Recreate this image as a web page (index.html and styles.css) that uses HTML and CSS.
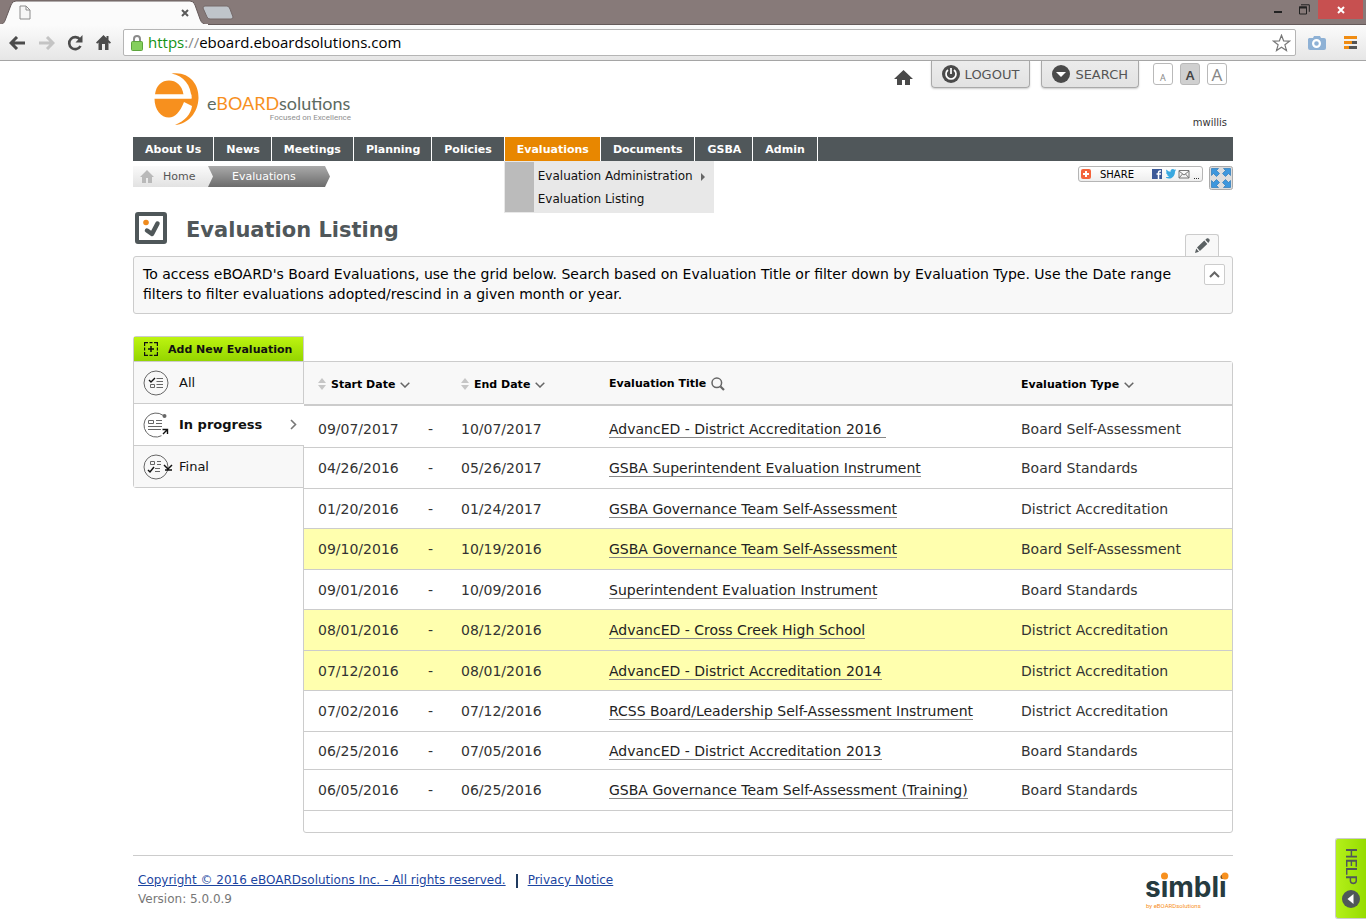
FILE: index.html
```html
<!DOCTYPE html>
<html lang="en">
<head>
    <meta charset="UTF-8">
    <meta name="viewport" content="width=device-width, initial-scale=1.0">
    <title>Evaluation Listing</title>
    <link rel="stylesheet" href="styles.css">
</head>
<body>
    <!-- Browser bar -->
    <div class="browser">
        <div class="titlebar">
            <div class="tab">
                <svg class="tab-shape" width="208" height="25" viewBox="0 0 208 25">
                    <path d="M0 25C4 24 5 21 6 18L11 5Q12 1 16 1H190Q194 1 195 5L200 19Q202 25 208 25Z" fill="#fbfbfb" stroke="#655a5a"/>
                    <path d="M0 25h208" stroke="#fbfbfb" stroke-width="2"/>
                </svg>
                <svg width="12" height="15" viewBox="0 0 12 15"><path d="M1 1h6l4 4v9H1zM7 1v4h4" fill="#f6f6f6" stroke="#8c8c8c"/></svg>
                <button class="plain" aria-label="Close tab"><svg width="8" height="8" viewBox="0 0 8 8"><path d="M1 1l6 6M7 1L1 7" stroke="#5a5a5a" stroke-width="2"/></svg></button>
            </div>
            <button class="plain new-tab" aria-label="New tab"><svg width="32" height="16" viewBox="0 0 32 16"><path d="M3 1h22q2 0 3 3l3 8q0 2-2 2H8q-2 0-3-2L1 3q0-2 2-2z" fill="#bfc4ca" stroke="#746969"/></svg></button>
            <div class="window-buttons">
                <button class="plain" aria-label="Minimize"><svg width="10" height="14" viewBox="0 0 10 14"><path d="M1 12h8" stroke="#222" stroke-width="2"/></svg></button>
                <button class="plain" aria-label="Restore"><svg width="11" height="11" viewBox="0 0 11 11"><path d="M.5 3h7v7h-7zM2 .8h8.300v7" fill="none" stroke="#222"/><path d="M0 3.500h8" stroke="#222" stroke-width="2"/></svg></button>
                <button class="plain window-close" aria-label="Close"><svg width="8" height="8" viewBox="0 0 8 8"><path d="M1 1l6 6M7 1L1 7" stroke="#fff" stroke-width="2"/></svg></button>
            </div>
        </div>
        <div class="toolbar">
            <button class="plain" aria-label="Back"><svg width="17" height="14" viewBox="0 0 17 14"><path d="M8 1L2 7l6 6M2 7h14" fill="none" stroke="#4c4c4c" stroke-width="3"/></svg></button>
            <button class="plain" aria-label="Forward"><svg width="17" height="14" viewBox="0 0 17 14"><path d="M9 1l6 6-6 6M15 7H1" fill="none" stroke="#c4c4c4" stroke-width="3"/></svg></button>
            <button class="plain" aria-label="Reload"><svg width="17" height="16" viewBox="0 0 17 16"><path d="M13 4.500A6 6 0 1 0 13.500 11" fill="none" stroke="#4c4c4c" stroke-width="2.600"/><path d="M15.500 0v7.500H8.500z" fill="#4c4c4c"/></svg></button>
            <button class="plain" aria-label="Home page"><svg width="15" height="15" viewBox="0 0 15 15"><path d="M7.500 0L0 7.500l1.200 1.300L2.500 7.600V15H6V9h3v6h3.500V7.600l1.300 1.200L15 7.500l-2.500-2.600V1h-2v1.900z" fill="#4c4c4c"/></svg></button>
            <div class="address">
                <svg width="12" height="16" viewBox="0 0 12 16"><path d="M3 7V4a3 3 0 0 1 6 0v3" fill="none" stroke="#8b8b8b" stroke-width="2"/><rect x=".5" y="6.500" width="11" height="9" rx="1" fill="#85cf5d" stroke="#5da53d"/></svg>
                <label for="url"><span class="secure">https</span>://</label>
                <input type="text" id="url" value="eboard.eboardsolutions.com">
                <button class="plain" aria-label="Bookmark"><svg width="19" height="18" viewBox="0 0 19 18"><path d="M9.500 1.200l2.100 5.600 5.900.3-4.600 3.700 1.600 5.800-5-3.300-5 3.300 1.600-5.800L1.500 7.100l5.900-.3z" fill="#fff" stroke="#777" stroke-width="1.200"/></svg></button>
            </div>
            <button class="plain" aria-label="Capture"><svg width="18" height="16" viewBox="0 0 18 16"><path d="M1 3h4l1-2h6l1 2h3q2 0 2 2v8q0 2-2 2H2q-2 0-2-2V4z" fill="#8eb1d5"/><circle cx="8.500" cy="8.500" r="3.400" fill="none" stroke="#fff" stroke-width="2.200"/></svg></button>
            <button class="plain browser-menu" aria-label="Menu"><svg width="13" height="13" viewBox="0 0 13 13"><path d="M0 1.500h13M0 6.500h8M0 11.500h5" stroke="#f08c12" stroke-width="3"/><path d="M8 6.500h5M5 11.500h8" stroke="#555" stroke-width="3"/></svg></button>
        </div>
    </div>

    <div class="page">
        <!-- Header -->
        <header class="header">
            <a href="#" class="logo" aria-label="eBOARDsolutions">
                <svg width="204" height="56" viewBox="0 0 204 56">
                    <path d="M18.500 2.500C36 0 46 13 45.500 27C45 42 35 53 22 54C32 50 38 43 39 35L31 31C27 41 22 46.500 16 46.500C8 46.500 1.500 39 1.500 27.500H38.500C38 14 31 5 18.500 2.500Z" fill="#f7901e"/>
                    <path d="M2 23.500C3 14 9 9.500 16 9.500S29 14 30.500 23.500z" fill="#f7901e"/>
                    <path d="M1 25.500h37.500" fill="none" stroke="#fff" stroke-width="4"/>
                    <text x="54" y="39" class="logo-name"><tspan>e</tspan><tspan class="logo-board">BOARD</tspan><tspan>solutions</tspan></text>
                    <text x="198" y="49" class="logo-tag">Focused on Excellence</text>
                </svg>
            </a>
            <div class="tools">
                <a href="#" class="home-link" aria-label="Home"><svg width="19" height="15" viewBox="0 0 19 15"><path d="M9.500 0L0 9h3v6h5V10h3v5h5V9h3z" fill="#4a4a4a"/></svg></a>
                <button class="top-button"><svg width="18" height="18" viewBox="0 0 18 18"><circle cx="9" cy="9" r="9" fill="#4a4a4a"/><path d="M6 5a5 5 0 1 0 6 0M9 3v6" fill="none" stroke="#fff" stroke-width="1.700"/></svg>LOGOUT</button>
                <button class="top-button"><svg width="18" height="18" viewBox="0 0 18 18"><circle cx="9" cy="9" r="9" fill="#4a4a4a"/><path d="M4 7h10l-5 5z" fill="#fff"/></svg>SEARCH</button>
                <div class="sizes">
                    <button class="size small">A</button>
                    <button class="size medium">A</button>
                    <button class="size large">A</button>
                </div>
            </div>
            <span class="user">mwillis</span>
        </header>

        <!-- Main menu -->
        <nav>
            <ul class="menu">
                <li><a href="#">About Us</a></li>
                <li><a href="#">News</a></li>
                <li><a href="#">Meetings</a></li>
                <li><a href="#">Planning</a></li>
                <li><a href="#">Policies</a></li>
                <li class="active"><a href="#">Evaluations</a>
                    <ul class="submenu">
                        <li><a href="#">Evaluation Administration <svg width="4" height="8" viewBox="0 0 4 8"><path d="M0 0l4 4-4 4z" fill="#666"/></svg></a></li>
                        <li><a href="#">Evaluation Listing</a></li>
                    </ul>
                </li>
                <li><a href="#">Documents</a></li>
                <li><a href="#">GSBA</a></li>
                <li><a href="#">Admin</a></li>
            </ul>
        </nav>

        <div class="subbar">
            <div class="breadcrumb">
                <a href="#" class="crumb"><svg width="14" height="13" viewBox="0 0 14 13"><path d="M7 0L0 7h2v6h4V8h2v5h4V7h2z" fill="#b9b9b9"/></svg>Home</a>
                <a href="#" class="crumb current">Evaluations</a>
            </div>
            <div class="share-box">
                <button class="share">
                    <svg width="10" height="10" viewBox="0 0 10 10"><rect width="10" height="10" rx="2" fill="#f4633a"/><path d="M5 2v6M2 5h6" stroke="#fff" stroke-width="2"/></svg>
                    <span>SHARE</span>
                    <svg width="48" height="12" viewBox="0 0 48 12"><rect y="1" width="10" height="10" fill="#3b5998"/><path d="M9 3H8Q6.500 3 6.500 5v6M4.500 6H9" fill="none" stroke="#fff" stroke-width="1.500"/><path d="M14 9q2 .3 3-.8-1.500-.2-2-1.500h.8Q14 6 14 4.300l.9.2Q13.500 3 14.400 1.500 16.200 3.700 18.500 3.800 18.500 1 20.800 1q1 0 1.700.7L24 1.200l-.9 1.300 1.100-.3-1.200 1.200C23 8 20 10.500 17 10.500q-1.700 0-3-.8z" fill="#3aa9e0"/><path d="M27 2.500h10v7.500H27zM27 3l5 4 5-4M27 10l3.500-4M37 10l-3.500-4" fill="none" stroke="#777"/><path d="M42 10.500h1M44 10.500h1M46 10.500h1" stroke="#333"/></svg>
                </button>
                <button class="plain" aria-label="Full screen"><svg width="24" height="24" viewBox="0 0 24 24"><rect x=".5" y=".5" width="23" height="23" rx="2" fill="#ddd" stroke="#aaa"/><g fill="#3d97dd" stroke="#1c6fb4" stroke-width=".6"><path d="M2.500 2.500h7L7.500 4.500 10.500 7.500 7.500 10.500 4.500 7.500 2.500 9.500z"/><path d="M21.500 2.500v7L19.500 7.500 16.500 10.500 13.500 7.500 16.500 4.500 14.500 2.500z"/><path d="M2.500 21.500v-7L4.500 16.500 7.500 13.500 10.500 16.500 7.500 19.500 9.500 21.500z"/><path d="M21.500 21.500h-7L16.500 19.500 13.500 16.500 16.500 13.500 19.500 16.500 21.500 14.500z"/></g></svg></button>
            </div>
        </div>

        <div class="title-row">
            <svg width="32" height="32" viewBox="0 0 32 32"><rect x="2" y="2" width="28" height="28" rx="1" fill="#fff" stroke="#4f5759" stroke-width="4"/><circle cx="11" cy="10.500" r="2.800" fill="#ee8a1d"/><path d="M12 18.500l5 3.500L22.500 11.500" fill="none" stroke="#4f5759" stroke-width="4.500" stroke-linecap="round" stroke-linejoin="round"/></svg>
            <h1>Evaluation Listing</h1>
            <button class="edit-tab" aria-label="Edit"><svg width="15" height="15" viewBox="0 0 15 15"><path d="M0 15l1.200-4.500 2.800 3.300zM2 9.500L9.300 2.600l3 3.300L4.900 13zM10.300 1.800L12 .3q1-.5 2 .5t.6 2.200L13.300 5z" fill="#5b6163"/></svg></button>
        </div>

        <!-- Description -->
        <section class="intro">
            <p>To access eBOARD's Board Evaluations, use the grid below. Search based on Evaluation Title or filter down by Evaluation Type. Use the Date range filters to filter evaluations adopted/rescind in a given month or year.</p>
            <button class="collapse" aria-label="Collapse"><svg width="11" height="7" viewBox="0 0 11 7"><path d="M1 6l4.500-4.500L10 6" fill="none" stroke="#666" stroke-width="2"/></svg></button>
        </section>

        <main class="content">
            <!-- Filter by status -->
            <aside class="sidebar">
                <button class="add"><svg width="14" height="14" viewBox="0 0 14 14"><path d="M.6 4V.6H4M10 .6h3.400V4M13.400 10v3.400H10M4 13.400H.6V10M5.500 .6h3M5.500 13.400h3M.6 5.500v3M13.400 5.500v3" fill="none" stroke="#111" stroke-width="1.200"/><path d="M7 4v6M4 7h6" stroke="#111" stroke-width="1.500"/></svg>Add New Evaluation</button>
                <a href="#" class="filter"><svg width="30" height="26" viewBox="0 0 30 26"><circle cx="13" cy="13" r="12" fill="none" stroke="#666"/><path d="M6 10l2 2 4-4" fill="none" stroke="#111" stroke-width="1.400"/><path d="M7.500 14.500h4v3h-4zM13.500 8.500H20M13.500 11.500H20M13.500 14.500H20M13.500 17.500H20" fill="none" stroke="#666"/></svg>All</a>
                <a href="#" class="filter selected"><svg width="30" height="26" viewBox="0 0 30 26"><path d="M20 3.300A12 12 0 1 0 18.500 23.700" fill="none" stroke="#666"/><circle cx="21.500" cy="4" r="2" fill="#666"/><path d="M20 22l4-4M19.500 17.500H24.500V22" fill="none" stroke="#111" stroke-width="1.400"/><path d="M5.500 8.500h5v3h-5zM13 8.500h6M13 11.500h6M5 14.500h14M5 17.500h13" fill="none" stroke="#666"/></svg>In progress<svg class="chevron" width="7" height="11" viewBox="0 0 7 11"><path d="M1 1l4.500 4.500L1 10" fill="none" stroke="#777" stroke-width="1.600"/></svg></a>
                <a href="#" class="filter"><svg width="30" height="26" viewBox="0 0 30 26"><circle cx="13" cy="13" r="12" fill="none" stroke="#666"/><path d="M7.500 7.500h4v3h-4zM14 7.500h4M14 10.500h4M12 14.500h5M12 17.500h5" fill="none" stroke="#666"/><path d="M5 16l2 2 4-5M21 11l4 4 4-4M22 16h7" fill="none" stroke="#111" stroke-width="1.500"/></svg>Final</a>
            </aside>

            <!-- Evaluation grid -->
            <div class="grid">
                <table>
                    <colgroup>
                        <col class="col-start">
                        <col class="col-dash">
                        <col class="col-end">
                        <col class="col-title">
                        <col>
                    </colgroup>
                    <thead>
                        <tr>
                            <th colspan="2"><svg class="sort" width="8" height="12" viewBox="0 0 8 12"><path d="M4 0l4 5H0zM0 7h8l-4 5z" fill="#c6c6c6"/></svg>Start Date<svg class="down" width="10" height="6" viewBox="0 0 10 6"><path d="M.7 .7L5 5 9.300 .7" fill="none" stroke="#666" stroke-width="1.500"/></svg></th>
                            <th><svg class="sort" width="8" height="12" viewBox="0 0 8 12"><path d="M4 0l4 5H0zM0 7h8l-4 5z" fill="#c6c6c6"/></svg>End Date<svg class="down" width="10" height="6" viewBox="0 0 10 6"><path d="M.7 .7L5 5 9.300 .7" fill="none" stroke="#666" stroke-width="1.500"/></svg></th>
                            <th>Evaluation Title<svg class="find" width="14" height="14" viewBox="0 0 14 14"><circle cx="5.800" cy="5.800" r="4.800" fill="none" stroke="#666" stroke-width="1.500"/><path d="M9.500 9.500L13 13" stroke="#666" stroke-width="2.200"/></svg></th>
                            <th>Evaluation Type<svg class="down" width="10" height="6" viewBox="0 0 10 6"><path d="M.7 .7L5 5 9.300 .7" fill="none" stroke="#666" stroke-width="1.500"/></svg></th>
                        </tr>
                    </thead>
                    <tbody>
                        <tr><td>09/07/2017</td><td>-</td><td>10/07/2017</td><td><a href="#">AdvancED - District Accreditation 2016&nbsp;</a></td><td>Board Self-Assessment</td></tr>
                        <tr><td>04/26/2016</td><td>-</td><td>05/26/2017</td><td><a href="#">GSBA Superintendent Evaluation Instrument</a></td><td>Board Standards</td></tr>
                        <tr><td>01/20/2016</td><td>-</td><td>01/24/2017</td><td><a href="#">GSBA Governance Team Self-Assessment</a></td><td>District Accreditation</td></tr>
                        <tr class="marked"><td>09/10/2016</td><td>-</td><td>10/19/2016</td><td><a href="#">GSBA Governance Team Self-Assessment</a></td><td>Board Self-Assessment</td></tr>
                        <tr><td>09/01/2016</td><td>-</td><td>10/09/2016</td><td><a href="#">Superintendent Evaluation Instrument</a></td><td>Board Standards</td></tr>
                        <tr class="marked"><td>08/01/2016</td><td>-</td><td>08/12/2016</td><td><a href="#">AdvancED - Cross Creek High School</a></td><td>District Accreditation</td></tr>
                        <tr class="marked"><td>07/12/2016</td><td>-</td><td>08/01/2016</td><td><a href="#">AdvancED - District Accreditation 2014</a></td><td>District Accreditation</td></tr>
                        <tr><td>07/02/2016</td><td>-</td><td>07/12/2016</td><td><a href="#">RCSS Board/Leadership Self-Assessment Instrument</a></td><td>District Accreditation</td></tr>
                        <tr><td>06/25/2016</td><td>-</td><td>07/05/2016</td><td><a href="#">AdvancED - District Accreditation 2013</a></td><td>Board Standards</td></tr>
                        <tr><td>06/05/2016</td><td>-</td><td>06/25/2016</td><td><a href="#">GSBA Governance Team Self-Assessment (Training)</a></td><td>Board Standards</td></tr>
                    </tbody>
                </table>
            </div>
        </main>

        <!-- Footer -->
        <footer class="footer">
            <div>
                <div class="legal"><a href="#">Copyright © 2016 eBOARDsolutions Inc. - All rights reserved.</a><span class="bar"></span><a href="#">Privacy Notice</a></div>
                <div class="version">Version: 5.0.0.9</div>
            </div>
            <svg width="88" height="42" viewBox="0 0 88 42">
                <text x="0" y="26" class="simbli">simbli</text>
                <circle cx="19.500" cy="5" r="3.500" fill="#f7901e"/>
                <circle cx="80" cy="5" r="3.500" fill="#f7901e"/>
                <text x="1" y="37" class="simbli-by">by eBOARDsolutions</text>
            </svg>
        </footer>
    </div>

    <button class="help"><span>HELP</span><svg width="18" height="18" viewBox="0 0 18 18"><circle cx="9" cy="9" r="9" fill="#4f5759"/><path d="M11.500 4v10l-6-5z" fill="#fff"/></svg></button>
</body>
</html>
```
FILE: styles.css
```css
* {
    box-sizing: border-box;
}

body {
    margin: 0;
    font-family: Verdana, 'DejaVu Sans', sans-serif;
    font-size: 13px;
    color: #333;
    background-color: #fff;
}

button {
    font-family: inherit;
    cursor: pointer;
}

svg {
    display: block;
    flex-shrink: 0;
}

.plain {
    background: none;
    border: none;
    padding: 0;
}

/* Browser bar */
.titlebar {
    display: flex;
    height: 25px;
    background-color: #877a79;
    border-bottom: 1px solid #655a5a;
}

.tab {
    position: relative;
    display: flex;
    align-items: center;
    justify-content: space-between;
    width: 208px;
    height: 25px;
    padding: 0 19px;
}

.tab svg {
    position: relative;
}

.tab .tab-shape {
    position: absolute;
    top: 0;
    left: 0;
}

.new-tab {
    height: 25px;
    margin-left: -6px;
}

.window-buttons {
    display: flex;
    align-items: flex-start;
    gap: 16px;
    margin-left: auto;
    margin-right: 3px;
}

.window-buttons .plain:nth-child(2) {
    margin-top: 4px;
}

.window-buttons .window-close {
    width: 45px;
    height: 19px;
    margin-left: -8px;
    background-color: #c75050;
    display: flex;
    align-items: center;
    justify-content: center;
}

.toolbar {
    display: flex;
    align-items: center;
    gap: 12px;
    height: 36px;
    padding: 0 9px;
    background: linear-gradient(#fbfbfb, #e6e6e6);
    border-bottom: 1px solid #a5a5a5;
}

.browser-menu {
    margin-left: 6px;
}

.address {
    flex: 1;
    display: flex;
    align-items: center;
    height: 27px;
    padding: 0 4px 0 7px;
    background-color: #fff;
    border: 1px solid #b5b5b5;
    border-radius: 2px;
    font-family: 'Open Sans', sans-serif;
    font-size: 15px;
    line-height: 20px;
    color: #888;
}

.address label {
    margin: 0 0 2px 5px;
}

.address .secure {
    color: #149214;
}

.address input {
    flex: 1;
    border: none;
    outline: none;
    margin-bottom: 2px;
    padding: 0;
    font-family: inherit;
    font-size: inherit;
    line-height: inherit;
    color: #000;
}

/* Page */
.page {
    max-width: 1100px;
    margin: 0 auto;
}

.header {
    display: grid;
    grid-template-columns: 1fr auto;
    grid-template-rows: 27px 1fr;
    height: 76px;
}

.logo {
    grid-row: span 2;
    padding: 10px 0 0 20px;
}

.logo-name {
    font-family: Lato, sans-serif;
    font-size: 18px;
    fill: #5d6b62;
}

.logo-board {
    fill: #f7901e;
}

.logo-tag {
    font-family: Roboto, sans-serif;
    font-size: 8px;
    fill: #8f8f8f;
    text-anchor: end;
}

.tools {
    display: flex;
    align-items: flex-start;
    gap: 11px;
    padding-right: 6px;
}

.home-link {
    margin: 9px 7px 0 0;
}

.top-button {
    display: flex;
    align-items: center;
    gap: 5px;
    height: 27px;
    padding: 0 10px;
    background: linear-gradient(#ececec, #e2e2e2);
    border: 1px solid #a9a9a9;
    border-top: none;
    border-radius: 0 0 4px 4px;
    box-shadow: 0 1px 2px #ccc;
    font-size: 13px;
    color: #555;
}

.sizes {
    display: flex;
    gap: 7px;
    margin: 2px 0 0 3px;
}

.size {
    display: flex;
    align-items: flex-end;
    justify-content: center;
    width: 20px;
    height: 22px;
    padding: 0;
    background-color: #fff;
    border: 1px solid #b9b9b9;
    border-radius: 3px;
    font-family: 'Noto Sans', sans-serif;
    line-height: 18px;
    color: #888;
}

.size.small {
    font-size: 9px;
    line-height: 12px;
}

.size.medium {
    font-size: 13px;
    background-color: #d0d0d0;
    color: #444;
    font-weight: 600;
}

.size.large {
    font-size: 17px;
}

.user {
    font-size: 10px;
    text-align: right;
    padding: 29px 6px 0 0;
}

/* Main menu */
.menu {
    display: flex;
    height: 24px;
    margin: 0;
    padding: 0;
    list-style: none;
    background-color: #50575a;
}

.menu > li {
    position: relative;
    border-right: 1px solid #fff;
}

.menu > li > a {
    display: block;
    height: 24px;
    padding: 0 12px;
    font-size: 11px;
    font-weight: bold;
    line-height: 25px;
    color: #fff;
    text-decoration: none;
}

.menu > li:nth-child(even) > a {
    padding-right: 11px;
}

.menu > .active {
    background-color: #e88700;
}

.submenu {
    position: absolute;
    top: 24px;
    left: -1px;
    z-index: 2;
    width: 210px;
    margin: 0;
    padding: 3px 0 1px;
    list-style: none;
    background: linear-gradient(90deg, #bbb 29px, #e8e8e8 29px);
    border: 1px solid #e8e8e8;
}

.submenu a {
    display: flex;
    align-items: center;
    gap: 8px;
    padding-left: 33px;
    font-size: 12px;
    line-height: 23px;
    color: #111;
    text-decoration: none;
    white-space: nowrap;
}

.subbar {
    display: flex;
    justify-content: space-between;
    height: 34px;
    padding-top: 5px;
}

.breadcrumb {
    display: flex;
    height: 21px;
}

.crumb {
    display: flex;
    align-items: center;
    gap: 9px;
    width: 82px;
    padding-left: 7px;
    font-size: 11px;
    color: #555;
    text-decoration: none;
    background: linear-gradient(#fafafa, #e2e2e2);
}

.crumb.current {
    width: 122px;
    margin-left: -7px;
    padding-left: 24px;
    color: #fff;
    background: linear-gradient(#aaa, #6c6c6c);
    clip-path: polygon(0 0, 117px 0, 100% 50%, 117px 100%, 0 100%, 5px 50%);
}

.share-box {
    display: flex;
    align-items: flex-start;
    gap: 6px;
}

.share {
    display: flex;
    align-items: center;
    gap: 9px;
    width: 125px;
    height: 16px;
    padding: 0 2px;
    background: linear-gradient(#fff, #eee);
    border: 1px solid #b5b5b5;
    border-radius: 3px;
    font-size: 10px;
    color: #000;
}

.share span {
    flex: 1;
    text-align: left;
}

/* Title */
.title-row {
    display: flex;
    align-items: flex-end;
    height: 61px;
    padding: 0 14px 0 2px;
}

.title-row > svg {
    margin-bottom: 12px;
}

h1 {
    flex: 1;
    margin: 0 0 12px 19px;
    font-size: 21px;
    line-height: 28px;
    color: #50575a;
}

.edit-tab {
    display: flex;
    align-items: center;
    justify-content: center;
    width: 34px;
    height: 22px;
    padding: 0;
    background-color: #f8f8f8;
    border: 1px solid #ccc;
    border-bottom: none;
    border-radius: 3px 3px 0 0;
}

.intro {
    display: flex;
    align-items: flex-start;
    gap: 20px;
    padding: 7px 7px 9px 9px;
    background-color: #f8f8f8;
    border: 1px solid #ccc;
    border-radius: 3px;
    color: #000;
}

.intro p {
    flex: 1;
    margin: 0;
    font-size: 14px;
    line-height: 20px;
}

.collapse {
    display: flex;
    align-items: center;
    justify-content: center;
    width: 21px;
    height: 21px;
    padding: 0;
    background-color: #fff;
    border: 1px solid #ccc;
    border-radius: 2px;
}

/* Content */
.content {
    display: flex;
    align-items: flex-start;
    margin-top: 22px;
}

.sidebar {
    position: relative;
    z-index: 1;
    width: 171px;
    border: 1px solid #ccc;
    border-radius: 3px 0 0 3px;
}

.add {
    display: flex;
    align-items: center;
    gap: 10px;
    width: 100%;
    height: 24px;
    padding: 0 10px;
    background: linear-gradient(#bdf410, #94d500);
    border: none;
    font-size: 11px;
    font-weight: bold;
    white-space: nowrap;
    color: #111;
}

.filter {
    display: flex;
    align-items: center;
    gap: 6px;
    height: 42px;
    padding-left: 9px;
    background-color: #f8f8f8;
    border-top: 1px solid #ccc;
    color: #111;
    text-decoration: none;
}

.filter.selected {
    margin-right: -1px;
    background-color: #fff;
    font-weight: bold;
}

.chevron {
    margin: 0 7px 0 auto;
}

.grid {
    flex: 1;
    margin: 25px 0 0 -1px;
    padding-bottom: 21px;
    border: 1px solid #ccc;
    border-radius: 0 3px 3px 3px;
}

table {
    width: 100%;
    table-layout: fixed;
    border-collapse: separate;
    border-spacing: 0;
}

.col-start {
    width: 110px;
}

.col-dash {
    width: 33px;
}

.col-end {
    width: 148px;
}

.col-title {
    width: 412px;
}

th {
    height: 44px;
    padding: 2px 0 0 14px;
    background-color: #f8f8f8;
    border-bottom: 2px solid #ccc;
    font-size: 11px;
    text-align: left;
    color: #000;
}

.sort {
    display: inline-block;
    margin-right: 5px;
    vertical-align: -2px;
}

.down {
    display: inline-block;
    margin-left: 5px;
    vertical-align: middle;
}

.find {
    display: inline-block;
    margin-left: 5px;
    vertical-align: -4px;
}

td {
    height: 40px;
    padding: 0 0 0 14px;
    border-bottom: 1px solid #ccc;
    font-size: 14px;
    white-space: nowrap;
}

tr:nth-child(even) td {
    height: 41px;
}

tbody tr:first-child td {
    height: 42px;
    padding-top: 5px;
}

tbody tr:nth-child(9) td {
    height: 38px;
}

.marked td {
    background-color: #ffffae;
}

td a {
    color: #222;
    text-decoration: none;
    border-bottom: 1px solid #888;
}

/* Footer */
.footer {
    display: flex;
    justify-content: space-between;
    margin-top: 22px;
    padding: 15px 0 0 5px;
    border-top: 1px solid #ccc;
    font-size: 12px;
    line-height: 19px;
}

.legal {
    display: flex;
    align-items: center;
}

.legal a {
    color: #1c45a0;
}

.bar {
    width: 2px;
    height: 14px;
    margin: 0 10px;
    background-color: #1f3a5f;
}

.version {
    color: #777;
}

.simbli {
    font-family: Inter, sans-serif;
    font-size: 28px;
    font-weight: 700;
    fill: #263b40;
}

.simbli-by {
    font-family: Roboto, sans-serif;
    font-size: 6px;
    fill: #f7901e;
}

.help {
    position: fixed;
    right: 0;
    bottom: 0;
    display: flex;
    flex-direction: column;
    align-items: center;
    gap: 5px;
    width: 31px;
    height: 81px;
    padding: 9px 0 0;
    background: linear-gradient(90deg, #b4f01a, #96dc00);
    border: 1px solid #ccc;
    border-right: none;
    border-radius: 3px 0 0 3px;
    font-family: Roboto, sans-serif;
    font-size: 15px;
    font-weight: 500;
    color: #50575a;
}

.help span {
    writing-mode: vertical-rl;
}
```
